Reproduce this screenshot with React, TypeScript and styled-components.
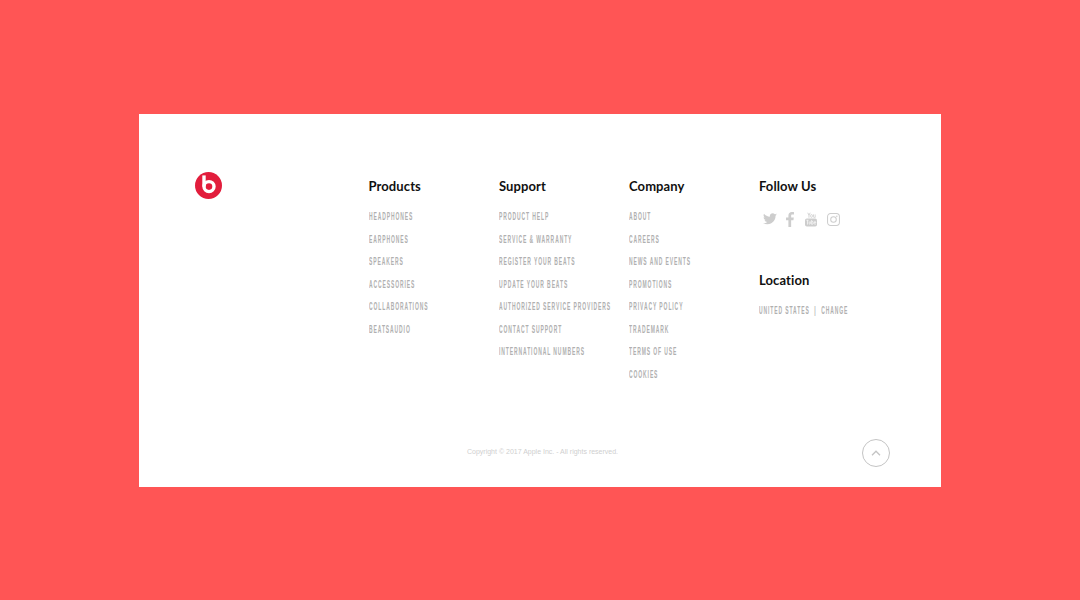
import React from "react";
import styled, { createGlobalStyle } from "styled-components";

const Global = createGlobalStyle`
  html, body { margin: 0; padding: 0; height: 100%; }
  body { background: #ff5555; -webkit-font-smoothing: antialiased; }
`;

const Page = styled.div`
  width: 1080px;
  height: 600px;
  display: flex;
  align-items: flex-start;
  justify-content: center;
  padding-top: 114px;
  box-sizing: border-box;
  overflow: hidden;
`;

const Card = styled.footer`
  width: 802px;
  height: 373px;
  background: #fff;
  display: flex;
  flex-direction: column;
  box-sizing: border-box;
  padding: 58px 51px 20px 56px;
`;

const Top = styled.div`
  display: grid;
  grid-template-columns: 173.5px 130.5px 130px 130px 1fr;
  height: 267px;
`;

const LogoCell = styled.div`
  display: block;
`;

const Column = styled.div`
  display: flex;
  flex-direction: column;
`;

const Heading = styled.h3<{ $gap?: number }>`
  margin: 5px 0 ${(p) => p.$gap ?? 9}px;
  font: 700 13px/18px "Lato", "Liberation Sans", sans-serif;
  letter-spacing: 0.1px;
  color: #111;
`;

const LinkList = styled.ul`
  list-style: none;
  margin: 0;
  padding: 0;
`;

const Item = styled.li`
  height: 22.5px;
  line-height: 22.5px;
  white-space: nowrap;
`;

const Label = styled.span`
  display: inline-block;
  font: 700 10px/22.5px "Liberation Sans", Arial, sans-serif;
  letter-spacing: 1.8px;
  color: #b0b0b0;
  text-transform: uppercase;
  transform: scaleX(0.5);
  transform-origin: left center;
`;

const Socials = styled.div`
  display: flex;
  align-items: center;
  height: 20px;
  margin-top: 5px;
  margin-bottom: 37px;
`;

const Location = styled.div`
  white-space: nowrap;
  height: 18px;
`;

const Bottom = styled.div`
  display: grid;
  grid-template-columns: 272px 1fr 28px;
  align-items: center;
  height: 28px;
`;

const Copyright = styled.p`
  margin: 0 0 2px;
  grid-column: 2;
  font: 400 7px/12px "Liberation Sans", Arial, sans-serif;
  letter-spacing: 0;
  color: #cfcfcf;
`;

const TopButton = styled.button`
  grid-column: 3;
  width: 28px;
  height: 28px;
  border-radius: 50%;
  border: 1px solid #c4c4c4;
  background: #fff;
  padding: 0;
  display: flex;
  align-items: center;
  justify-content: center;
`;

const Logo = () => (
  <svg width="27" height="27" viewBox="0 0 27 27" style={{ display: "block" }}>
    <circle cx="13.5" cy="13.5" r="13.5" fill="#e21d3c" />
    <circle cx="14" cy="14.6" r="5" fill="none" stroke="#fff" strokeWidth="3.4" />
    <path d="M9 3.4 L9 14.6" stroke="#fff" strokeWidth="3.4" fill="none" />
  </svg>
);

const Twitter = () => (
  <svg width="14" height="12" viewBox="0 0 24 20" style={{ marginLeft: 4 }}>
    <path
      fill="#cdcdcd"
      d="M24 2.4c-.9.4-1.8.7-2.8.8 1-.6 1.8-1.6 2.2-2.7-1 .6-2 1-3.1 1.2C19.3.7 18 0 16.6 0c-2.7 0-4.9 2.2-4.9 4.9 0 .4 0 .8.1 1.1C7.7 5.8 4.1 3.9 1.7.9c-.4.7-.7 1.6-.7 2.5 0 1.7.9 3.2 2.2 4.1-.8 0-1.6-.2-2.2-.6v.1c0 2.4 1.7 4.4 3.9 4.8-.4.1-.8.2-1.3.2-.3 0-.6 0-.9-.1.6 2 2.4 3.4 4.6 3.4-1.7 1.3-3.8 2.1-6.1 2.1-.4 0-.8 0-1.2-.1C2.2 18.3 4.8 19 7.5 19c9.1 0 14-7.5 14-14v-.6c1-.7 1.8-1.6 2.5-2z"
    />
  </svg>
);

const Facebook = () => (
  <svg width="8" height="15" viewBox="0 0 9 17" style={{ marginLeft: 9 }}>
    <path
      fill="#cdcdcd"
      d="M5.8 17V9.3h2.6l.4-3H5.8V4.4c0-.9.2-1.5 1.5-1.5H9V.2C8.7.1 7.7 0 6.6 0 4.3 0 2.7 1.4 2.7 4v2.3H0v3h2.7V17z"
    />
  </svg>
);

const Youtube = () => (
  <svg width="12" height="15" viewBox="0 0 13 15" style={{ marginLeft: 11 }}>
    <g fill="none" stroke="#cdcdcd" strokeWidth="0.9">
      <path d="M3 0.2 L4.3 3 L5.6 0.2 M4.3 3 V5.6" />
      <rect x="6.1" y="2.2" width="1.9" height="3" rx="0.9" />
      <path d="M9.2 2 V4.6 Q9.2 5.3 10 5.3 Q10.6 5.3 11 4.6 M11 2 V5.5" />
    </g>
    <rect x="0" y="6.5" width="13" height="8.5" rx="2" fill="#cdcdcd" />
    <g fill="none" stroke="#fff" strokeWidth="0.7">
      <path d="M1.5 8.3 H3.9 M2.7 8.3 V13" />
      <path d="M4.5 9.6 V12.2 Q4.6 12.9 5.8 12 V9.6" />
      <path d="M7.2 8 V13 M7.2 10 Q8.7 9 8.7 10.4 V12 Q8.7 13.2 7.2 12.2" />
      <path d="M9.9 11 H11.7 Q11.7 9.6 10.8 9.6 Q9.9 9.6 9.9 11 V12 Q10 13 11.7 12.4" />
    </g>
  </svg>
);

const Instagram = () => (
  <svg width="13" height="13" viewBox="0 0 14 14" style={{ marginLeft: 10 }}>
    <g fill="none" stroke="#cdcdcd" strokeWidth="1.1">
      <rect x="0.6" y="0.6" width="12.8" height="12.8" rx="3.4" />
      <circle cx="7" cy="7" r="3" />
    </g>
    <circle cx="10.6" cy="3.4" r="0.8" fill="#cdcdcd" />
  </svg>
);

const Chevron = () => (
  <svg width="10" height="6" viewBox="0 0 10 6">
    <path d="M1 5.2 L5 1.2 L9 5.2" fill="none" stroke="#c4c4c4" strokeWidth="1.3" />
  </svg>
);

const products = ["Headphones", "Earphones", "Speakers", "Accessories", "Collaborations", "BeatsAudio"];
const support = [
  "Product Help",
  "Service & Warranty",
  "Register Your Beats",
  "Update Your Beats",
  "Authorized Service Providers",
  "Contact Support",
  "International Numbers",
];
const company = ["About", "Careers", "News and Events", "Promotions", "Privacy Policy", "Trademark", "Terms of Use", "Cookies"];

const Links = ({ items }: { items: string[] }) => (
  <LinkList>
    {items.map((t) => (
      <Item key={t}>
        <Label>{t}</Label>
      </Item>
    ))}
  </LinkList>
);

export default function App() {
  return (
    <>
      <Global />
      <Page>
        <Card>
          <Top>
            <LogoCell>
              <Logo />
            </LogoCell>
            <Column>
              <Heading>Products</Heading>
              <Links items={products} />
            </Column>
            <Column>
              <Heading>Support</Heading>
              <Links items={support} />
            </Column>
            <Column>
              <Heading>Company</Heading>
              <Links items={company} />
            </Column>
            <Column>
              <Heading>Follow Us</Heading>
              <Socials>
                <Twitter />
                <Facebook />
                <Youtube />
                <Instagram />
              </Socials>
              <Heading $gap={11}>Location</Heading>
              <Location>
                <Label>United States &nbsp;|&nbsp; Change</Label>
              </Location>
            </Column>
          </Top>
          <Bottom>
            <Copyright>Copyright © 2017 Apple Inc. - All rights reserved.</Copyright>
            <TopButton aria-label="Back to top">
              <Chevron />
            </TopButton>
          </Bottom>
        </Card>
      </Page>
    </>
  );
}
